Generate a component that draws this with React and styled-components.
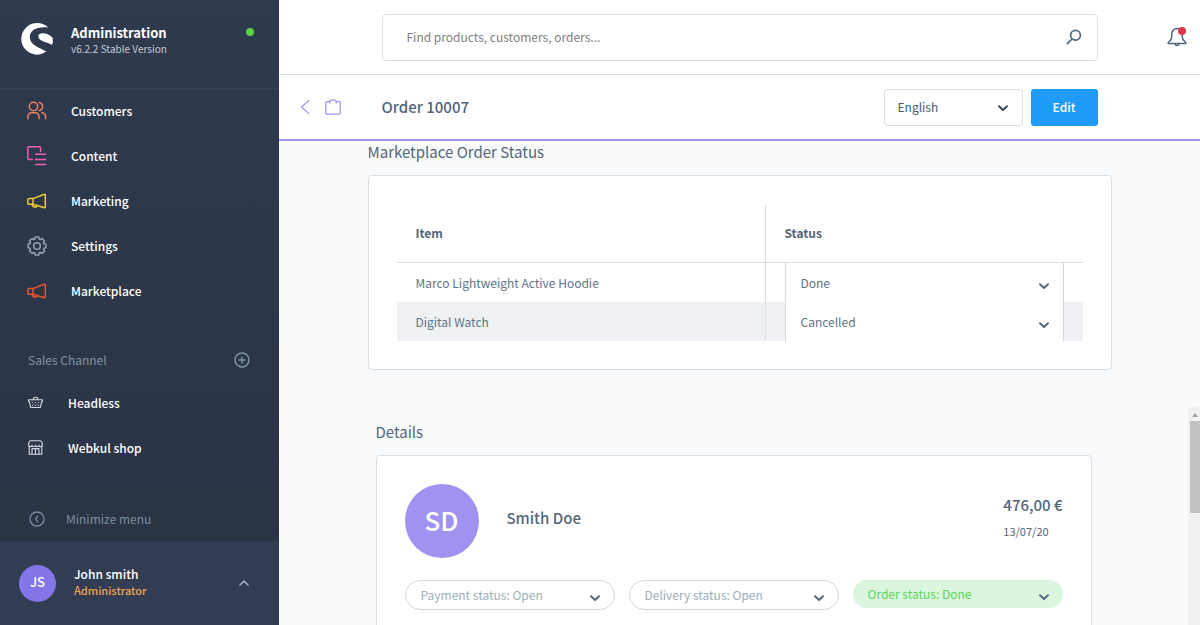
import React from 'react'
import styled, { createGlobalStyle, ThemeProvider } from 'styled-components'

const theme = {
  colors: {
    text: '#52667a',
    border: '#d8dfe6',
    purple: '#a092f0',
    blue: '#209cf8',
    page: '#f9fafc',
  },
}

const orderItems = [
  { name: 'Marco Lightweight Active Hoodie', status: 'Done' },
  { name: 'Digital Watch', status: 'Cancelled' },
]

const statuses = ['Open', 'In progress', 'Done', 'Cancelled']

// outline of an eight-toothed wheel in a 20x20 box
const gearPath = () => {
  const points = []
  for (let i = 0; i < 8; i++) {
    const mid = (i * Math.PI) / 4
    const corners = [[-0.3, 7.3], [-0.2, 9.1], [0.2, 9.1], [0.3, 7.3]]
    corners.forEach(([shift, r]) => {
      const x = 10 + r * Math.sin(mid + shift)
      const y = 10 - r * Math.cos(mid + shift)
      points.push(`${x.toFixed(2)} ${y.toFixed(2)}`)
    })
  }
  return `M${points.join('L')}Z`
}

const Icon = ({ size = 20, box = 20, color = 'currentColor', stroke = 1.5, children }) => (
  <svg
    width={size}
    height={size}
    viewBox={`0 0 ${box} ${box}`}
    fill="none"
    stroke={color}
    strokeWidth={stroke}
    strokeLinecap="round"
    strokeLinejoin="round"
    aria-hidden="true"
  >
    {children}
  </svg>
)

const Logo = () => (
  <svg width="32" height="32" viewBox="0 0 32 32" fill="#fff" aria-hidden="true">
    <path d="M27.2 4.6A15.8 15.8 0 1 0 25.4 28.6C19 24.6 8.8 22.6 8.8 14C8.8 7 16.5 3.2 27.2 4.6Z" />
    <path d="M17.2 13.2C17.4 11.2 19 10.2 21.5 10.2C25.5 10.2 29.5 12.2 31.4 14.6C32.1 17 31.9 19.6 31.2 21.8C26.5 19.6 17 18 17.2 13.2Z" />
  </svg>
)

const CustomersIcon = ({ color }) => (
  <Icon color={color}>
    <circle cx="6.5" cy="5.5" r="4.2" />
    <path d="M.9 17.8V15.4A3.6 3.6 0 0 1 4.5 11.8H8.4A3.6 3.6 0 0 1 12 15.4V17.8" />
    <path d="M12.3 1.4A4.2 4.2 0 0 1 12.3 9.6M14.8 11.8A4 4 0 0 1 18.6 15.6V17.8" />
  </Icon>
)

const ContentIcon = ({ color }) => (
  <Icon color={color}>
    <path d="M13.6 5.4V2.2A1.4 1.4 0 0 0 12.2.8H2.2A1.4 1.4 0 0 0 .8 2.2V12.2A1.4 1.4 0 0 0 2.2 13.6H5.4" />
    <path d="M8.6 8.3H18.6M8.6 13.4H18.6M8.6 18.4H18.6" />
  </Icon>
)

const MegaphoneIcon = ({ color }) => (
  <Icon color={color}>
    <path d="M6 7.6L17.4 3.3A.6.6 0 0 1 18.3 3.9V16.1A.6.6 0 0 1 17.5 16.7L6 13.2Z" />
    <path d="M6 7.6H2A1.2 1.2 0 0 0 .8 8.8V12A1.2 1.2 0 0 0 2 13.2H6" />
    <path d="M5.4 13.4A2.5 2.5 0 0 0 10.2 14.6" />
  </Icon>
)

const SettingsIcon = ({ color }) => (
  <Icon color={color}>
    <path d={gearPath()} />
    <circle cx="10" cy="10" r="3.3" />
  </Icon>
)

const BasketIcon = () => (
  <Icon size={15} box={16} stroke={1.2} color="#d3d9e2">
    <path d="M.7 5H15.3V7H14.6L13.2 13.3H2.8L1.4 7H.7Z" />
    <path d="M5.4 5A2.6 2.6 0 0 1 10.6 5" />
    <path d="M4.5 8H4.6M8 8H8.1M11.4 8H11.5M6.2 9.7H6.3M9.7 9.7H9.8M4.8 11.3H4.9M8 11.3H8.1M11.2 11.3H11.3" />
  </Icon>
)

const ShopIcon = () => (
  <Icon size={15} box={16} stroke={1.2} color="#d3d9e2">
    <path d="M1.3 6.5V15.2H14.7V6.5" />
    <path d="M2.3.8H13.7L15.3 3.4V5.4A1.8 1.8 0 0 1 11.7 5.4A1.8 1.8 0 0 1 8 5.4A1.8 1.8 0 0 1 4.3 5.4A1.8 1.8 0 0 1 .7 5.4V3.4Z" />
    <path d="M4.3 15V9.2H11.7V15M8 9.2V15" />
  </Icon>
)

const Chevron = ({ color = '#52667a' }) => (
  <Icon size={12} box={12} stroke={1.9} color={color}>
    <path d="M2 4.2L6 8L10 4.2" />
  </Icon>
)

const navItems = [
  { label: 'Customers', icon: CustomersIcon, color: '#e8835c' },
  { label: 'Content', icon: ContentIcon, color: '#ee5fb0' },
  { label: 'Marketing', icon: MegaphoneIcon, color: '#f0c93a' },
  { label: 'Settings', icon: SettingsIcon, color: '#96a3b3' },
  { label: 'Marketplace', icon: MegaphoneIcon, color: '#e6552f' },
]

const Sidebar = () => (
  <Aside>
    <Brand>
      <Logo />
      <BrandText>
        <BrandName>Administration</BrandName>
        <Version>v6.2.2 Stable Version</Version>
      </BrandText>
      <OnlineDot />
    </Brand>
    <MainNav>
      {navItems.map(({ label, icon: NavIcon, color }) => (
        <NavLink key={label} href="#">
          <NavIcon color={color} />
          {label}
        </NavLink>
      ))}
    </MainNav>
    <ChannelHead>
      Sales Channel
      <IconButton aria-label="Add sales channel">
        <Icon size={16} box={16}>
          <circle cx="8" cy="8" r="7" />
          <path d="M8 5V11M5 8H11" />
        </Icon>
      </IconButton>
    </ChannelHead>
    <nav>
      <ChannelLink href="#"><BasketIcon />Headless</ChannelLink>
      <ChannelLink href="#"><ShopIcon />Webkul shop</ChannelLink>
    </nav>
    <Minimize>
      <Icon size={16} box={16} stroke={1.3}>
        <circle cx="8" cy="8" r="7" />
        <path d="M8.8 5.2L6.8 8L8.8 10.8" />
      </Icon>
      Minimize menu
    </Minimize>
    <User>
      <Avatar size={37} font={13} color="#8475e8">JS</Avatar>
      <UserText>
        <UserName>John smith</UserName>
        <UserRole>Administrator</UserRole>
      </UserText>
      <Icon size={12} box={12} stroke={1.7} color="#98a6b8">
        <path d="M2 8L6 4L10 8" />
      </Icon>
    </User>
  </Aside>
)

const Select = ({ label, value, options, variant }) => (
  <SelectBox $variant={variant}>
    <NativeSelect aria-label={label} defaultValue={value} $variant={variant}>
      {options.map(option => <option key={option}>{option}</option>)}
    </NativeSelect>
    <Arrow $variant={variant}><Chevron color={variant === 'field' ? '#35475a' : undefined} /></Arrow>
  </SelectBox>
)

const App = () => {
  return (
    <ThemeProvider theme={theme}>
      <GlobalStyle />
      <Page>
        <Sidebar />
        <Main>
          <TopBar>
            <SearchBox>
              <SearchInput type="text" aria-label="Search" placeholder="Find products, customers, orders..." />
              <IconButton aria-label="Start search">
                <Icon size={16} box={16} stroke={1.7} color="#52667a">
                  <circle cx="9.5" cy="6.3" r="4.9" />
                  <path d="M5.9 10L1.4 14.6" />
                </Icon>
              </IconButton>
            </SearchBox>
            <Notifications aria-label="Notifications">
              <Icon color="#52667a">
                <path d="M10 1.5A5.4 5.4 0 0 0 4.7 6.9V10.2Q4.7 12.4 2.3 14.3Q.8 15.4 1.2 16.5H18.8Q19.2 15.4 17.7 14.3Q15.3 12.4 15.3 10.2V6.9A5.4 5.4 0 0 0 10 1.5Z" />
                <path d="M8.2 17.2A1.9 1.9 0 0 0 11.8 17.2" />
              </Icon>
              <Badge />
            </Notifications>
          </TopBar>
          <PageHeader>
            <BackGroup>
              <IconButton aria-label="Back">
                <Icon size={16} box={16} stroke={1.2}>
                  <path d="M12 1.4L4.6 8L12 14.6" />
                </Icon>
              </IconButton>
              <Icon size={16} box={16} stroke={1.2}>
                <path d="M4.8 2.6H1.9A1 1 0 0 0 .9 3.6L.7 14.2A1 1 0 0 0 1.7 15.2H14.3A1 1 0 0 0 15.3 14.2L15.1 3.6A1 1 0 0 0 14.1 2.6H11.2M4.8 4V2.6Q5.2 .8 8 .8Q10.8 .8 11.2 2.6V4" />
              </Icon>
            </BackGroup>
            <HeaderContent>
              <PageTitle>Order 10007</PageTitle>
              <Select label="Language" value="English" options={['English', 'Deutsch']} variant="field" />
              <EditButton>Edit</EditButton>
            </HeaderContent>
          </PageHeader>
          <StatusSection>
            <SectionTitle>Marketplace Order Status</SectionTitle>
            <Card>
              <Table>
                <thead>
                  <tr>
                    <th>Item</th>
                    <th>Status</th>
                  </tr>
                </thead>
                <tbody>
                  {orderItems.map(({ name, status }) => (
                    <tr key={name}>
                      <td>{name}</td>
                      <td>
                        <Select label={`Status of ${name}`} value={status} options={statuses} variant="cell" />
                      </td>
                    </tr>
                  ))}
                </tbody>
              </Table>
            </Card>
          </StatusSection>
          <Scroller>
            <DetailsSection>
              <SectionTitle>Details</SectionTitle>
              <DetailsCard>
                <Summary>
                  <Avatar size={74} font={26} color="#a092f0">SD</Avatar>
                  <CustomerName>Smith Doe</CustomerName>
                  <Total>
                    <Amount>476,00 €</Amount>
                    <OrderDate>13/07/20</OrderDate>
                  </Total>
                </Summary>
                <Pills>
                  <Select
                    label="Payment status"
                    value="Payment status: Open"
                    options={['Payment status: Open', 'Payment status: Paid']}
                    variant="pill"
                  />
                  <Select
                    label="Delivery status"
                    value="Delivery status: Open"
                    options={['Delivery status: Open', 'Delivery status: Shipped']}
                    variant="pill"
                  />
                  <Select
                    label="Order status"
                    value="Order status: Done"
                    options={['Order status: Open', 'Order status: Done']}
                    variant="done"
                  />
                </Pills>
              </DetailsCard>
            </DetailsSection>
            <Track>
              <TrackArrow />
              <Thumb />
            </Track>
          </Scroller>
        </Main>
      </Page>
    </ThemeProvider>
  )
}

const GlobalStyle = createGlobalStyle`
  * {
    box-sizing: border-box;
  }

  body {
    margin: 0;
    overflow: hidden;
  }

  body, button, input, select {
    font-family: "Source Sans Pro", "Noto Sans CJK SC", "Noto Sans", sans-serif;
    font-size: 12px;
    line-height: 16px;
  }

  svg {
    display: block;
    flex: none;
  }
`

const Page = styled.div`
  display: grid;
  grid-template-columns: 279px minmax(0, 1fr);
  grid-template-rows: minmax(0, 1fr);
  height: 100vh;
  color: ${props => props.theme.colors.text};
`

const Aside = styled.aside`
  display: flex;
  flex-direction: column;
  background: linear-gradient(#303a4f, #293343);
  color: #fff;
`

const Brand = styled.div`
  display: flex;
  flex: none;
  align-items: flex-start;
  height: 89px;
  padding: 23px 25px 0 21px;
  border-bottom: 1px solid #344358;
`

const BrandText = styled.div`
  flex: 1;
  padding: 2px 0 0 18px;
`

const BrandName = styled.div`
  font-size: 13px;
  font-weight: 600;
`

const Version = styled.div`
  font-size: 10px;
  color: #c3cad5;
`

const OnlineDot = styled.span`
  width: 8px;
  height: 8px;
  margin-top: 5px;
  border-radius: 50%;
  background: #5bd043;
`

const MainNav = styled.nav`
  display: grid;
  flex: none;
  grid-auto-rows: 1fr;
  height: 224px;
`

const NavLink = styled.a`
  display: flex;
  align-items: center;
  gap: 24px;
  padding-left: 27px;
  color: #fff;
  font-weight: 500;
  text-decoration: none;
`

const ChannelLink = styled(NavLink)`
  gap: 25px;
  height: 45px;
  padding-left: 28px;
`

const IconButton = styled.button`
  padding: 0;
  border: 0;
  background: none;
  color: inherit;
`

const ChannelHead = styled.div`
  display: flex;
  flex: none;
  align-items: center;
  justify-content: space-between;
  height: 40px;
  margin: 27px 29px 0 28px;
  color: #7f93a6;
`

const Minimize = styled(IconButton)`
  display: flex;
  align-items: center;
  gap: 21px;
  height: 45px;
  margin-top: auto;
  padding-left: 29px;
  color: #7c8da0;
`

const User = styled.div`
  display: flex;
  flex: none;
  align-items: center;
  height: 84px;
  padding: 0 29px 0 19px;
  background: #323d53;
`

const UserText = styled.div`
  flex: 1;
  padding: 0 0 2px 18px;
  font-weight: 500;
`

const UserName = styled.div`
  color: #fff;
`

const UserRole = styled.div`
  font-size: 11px;
  color: #eaa54c;
`

const AvatarCircle = styled.div`
  display: flex;
  flex: none;
  align-items: center;
  justify-content: center;
  width: ${props => props.$size}px;
  height: ${props => props.$size}px;
  padding-bottom: 2px;
  border-radius: 50%;
  background: ${props => props.$color};
  color: #fff;
  font-size: ${props => props.$font}px;
  font-weight: 500;
`

const Avatar = ({ size, font, color, children }) => (
  <AvatarCircle $size={size} $font={font} $color={color}>{children}</AvatarCircle>
)

const Main = styled.main`
  display: flex;
  flex-direction: column;
  min-width: 0;
  background: ${props => props.theme.colors.page};
`

const TopBar = styled.header`
  display: grid;
  flex: none;
  grid-template-columns: 1fr minmax(0, 716px) 1fr;
  align-items: center;
  height: 75px;
  border-bottom: 1px solid ${props => props.theme.colors.border};
  background: #fff;
`

const SearchBox = styled.div`
  display: flex;
  grid-column: 2;
  align-items: center;
  height: 47px;
  padding: 0 15px 0 24px;
  border: 1px solid ${props => props.theme.colors.border};
  border-radius: 4px;
`

const SearchInput = styled.input`
  flex: 1;
  min-width: 0;
  padding: 0;
  border: 0;
  outline: 0;
  background: none;

  &::placeholder {
    color: #7c7f83;
    opacity: 1;
  }
`

const Notifications = styled(IconButton)`
  position: relative;
  justify-self: end;
  margin-right: 13px;
`

const Badge = styled.span`
  position: absolute;
  top: 0;
  right: 1px;
  width: 8px;
  height: 8px;
  border-radius: 50%;
  background: #de3648;
`

const PageHeader = styled.div`
  display: grid;
  flex: none;
  grid-template-columns: 1fr minmax(0, 716px) 1fr;
  align-items: center;
  height: 66px;
  border-bottom: 2px solid ${props => props.theme.colors.purple};
  background: #fff;
`

const BackGroup = styled.div`
  display: flex;
  gap: 12px;
  padding-left: 18px;
  color: ${props => props.theme.colors.purple};
`

const HeaderContent = styled.div`
  display: flex;
  align-items: center;
  gap: 8px;
`

const PageTitle = styled.h1`
  flex: 1;
  margin: 0;
  font-size: 15px;
  font-weight: 500;
`

const EditButton = styled.button`
  width: 67px;
  height: 37px;
  border: 0;
  border-radius: 3px;
  background: ${props => props.theme.colors.blue};
  color: #fff;
  font-weight: 500;
`

const selectBoxes = {
  field: 'width: 139px; height: 37px; border: 1px solid #d8dfe6; border-radius: 3px;',
  cell: 'height: 39px; border: solid #d1d9e0; border-width: 0 1px;',
  pill: 'height: 30px; border: 1px solid #d1d9e0; border-radius: 15px;',
  done: 'height: 28px; border-radius: 14px; background: #dbf6df;',
}

const selectColors = {
  field: '#475b70',
  cell: '#5f7387',
  pill: '#9aafbd',
  done: '#5cd45c',
}

const SelectBox = styled.div`
  display: grid;
  background: #fff;
  ${props => selectBoxes[props.$variant]}
`

const NativeSelect = styled.select`
  grid-area: 1 / 1;
  width: 100%;
  height: 100%;
  padding: 0 32px 0 ${props => (props.$variant === 'field' ? 13 : 15)}px;
  border: 0;
  outline: 0;
  appearance: none;
  background: none;
  color: ${props => selectColors[props.$variant]};
`

const Arrow = styled.span`
  grid-area: 1 / 1;
  align-self: center;
  justify-self: end;
  padding: ${props => (props.$variant === 'field' ? 2 : 6)}px 13px 0 0;
  pointer-events: none;
`

const StatusSection = styled.section`
  flex: none;
  width: 100%;
  max-width: 744px;
  margin: 0 auto 37px;
`

const SectionTitle = styled.h2`
  margin: 0;
  padding-bottom: 12px;
  font-size: 15px;
  font-weight: 400;
  line-height: 22px;
`

const Card = styled.div`
  padding: 28px;
  border: 1px solid ${props => props.theme.colors.border};
  border-radius: 4px;
  background: #fff;
`

const Table = styled.table`
  width: 100%;
  border-collapse: separate;
  border-spacing: 0;
  text-align: left;

  th {
    height: 59px;
    padding: 0 19px;
    border-bottom: 1px solid ${props => props.theme.colors.border};
    font-weight: 700;
  }

  td {
    height: 39px;
    padding: 0 19px;
    color: #5f7387;
  }

  th:first-child,
  td:first-child {
    border-right: 1px solid #dcdfe6;
  }

  th:last-child {
    width: 317px;
  }

  tbody tr:nth-child(even) {
    background: #eff1f5;
  }
`

const Scroller = styled.div`
  display: flex;
  flex: 1;
  min-height: 0;
  overflow: hidden;
`

const DetailsSection = styled.section`
  flex: 1;
  max-width: 716px;
  margin: 0 auto;
  padding-top: 14px;
`

const DetailsCard = styled(Card)`
  padding-bottom: 60px;
`

const Summary = styled.div`
  display: flex;
  align-items: center;
  padding-bottom: 22px;
`

const CustomerName = styled.div`
  flex: 1;
  padding: 0 0 6px 28px;
  font-size: 15px;
  font-weight: 500;
`

const Total = styled.div`
  padding-bottom: 6px;
`

const Amount = styled.div`
  padding-bottom: 10px;
  font-size: 15px;
  font-weight: 500;
`

const OrderDate = styled.div`
  font-size: 11px;
`

const Pills = styled.div`
  display: grid;
  grid-template-columns: repeat(3, 1fr);
  gap: 14px;
`

const Track = styled.div`
  flex: none;
  width: 12px;
  padding: 6px 0 0 2px;
  background: #f1f1f1;
`

const TrackArrow = styled.div`
  width: 6px;
  margin: 0 0 4px 2px;
  border: solid transparent;
  border-width: 0 3px 4px;
  border-bottom-color: #a3a3a3;
`

const Thumb = styled.div`
  height: 92px;
  background: #c1c1c1;
`

export default App
